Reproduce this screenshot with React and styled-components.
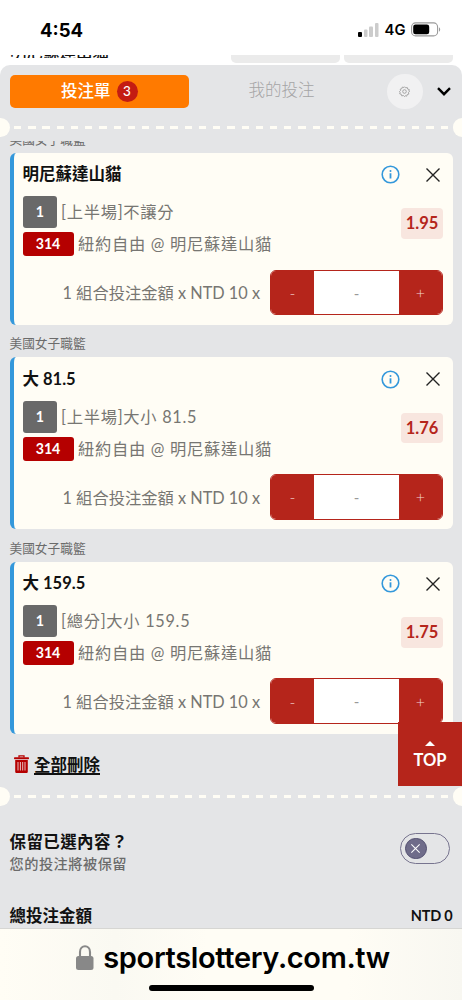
import React from 'react'
import styled, { createGlobalStyle } from 'styled-components'

const red = '#b5251b'
const cream = '#fffdf5'
const grey = '#e4e5e7'

const GlobalStyle = createGlobalStyle`
  * {
    box-sizing: border-box;
  }
  body {
    margin: 0;
    font-family: Lato, 'Noto Sans CJK TC', sans-serif;
    background: #fff;
    color: #111;
  }
  button {
    border: 0;
    padding: 0;
    font: inherit;
    background: none;
  }
`

const Screen = styled.div`
  width: 462px;
  height: 1000px;
  display: flex;
  flex-direction: column;
  overflow: hidden;
  background: #fff;
`

/* status bar */
const StatusBar = styled.header`
  height: 55px;
  flex: none;
  display: flex;
  align-items: center;
  justify-content: space-between;
  padding: 4px 21px 0 40px;
  font-family: Inter, sans-serif;
`

const Clock = styled.span`
  font-size: 18.5px;
  font-weight: 700;
  letter-spacing: 0;
  color: #000;
`

const StatusIcons = styled.div`
  display: flex;
  align-items: center;
  gap: 5.5px;
  font-size: 14.8px;
  font-weight: 600;
  color: #000;
`

/* bottom edge of the page behind the bet slip */
const PageBehind = styled.div`
  height: 10px;
  flex: none;
  display: flex;
  gap: 4.5px;
  padding: 0 9px 0 10px;
  overflow: hidden;
`

const BehindTitle = styled.div`
  width: 216.5px;
  height: 3px;
  flex: none;
  display: flex;
  align-items: flex-end;
  overflow: hidden;
  font-size: 16.5px;
  font-weight: 500;
  line-height: 11px;
`

const BehindButton = styled.div`
  width: 108.5px;
  height: 7.5px;
  flex: none;
  border-radius: 0 0 5px 5px;
  background: #ebebeb;
`

const Slip = styled.main`
  height: 863px;
  flex: none;
  display: flex;
  flex-direction: column;
  overflow: hidden;
  border-radius: 10px 10px 0 0;
  background: ${grey};
`

const Tabs = styled.nav`
  height: 52.5px;
  flex: none;
  display: flex;
  align-items: center;
  padding: 0 11px 0 9.5px;
`

const Tab = styled.button`
  width: ${({ $active }) => ($active ? '179.5px' : '185px')};
  height: 33.5px;
  display: flex;
  align-items: center;
  justify-content: center;
  gap: 6px;
  border-radius: 5px;
  padding-bottom: ${({ $active }) => ($active ? 0 : '1px')};
  font-size: 16.5px;
  line-height: 21px;
  font-weight: ${({ $active }) => ($active ? 500 : 300)};
  color: ${({ $active }) => ($active ? '#fff' : '#a4a4a5')};
  background: ${({ $active }) => ($active ? '#ff7a00' : 'transparent')};
`

const Count = styled.span`
  width: 21px;
  height: 21px;
  border-radius: 50%;
  background: #c41c12;
  font-size: 13.5px;
  font-weight: 500;
  line-height: 21px;
  text-align: center;
`

const GearButton = styled.button`
  width: 35.5px;
  height: 35.5px;
  margin: 0 14px 0 13px;
  display: flex;
  align-items: center;
  justify-content: center;
  border-radius: 50%;
  background: #f1f1f2;
`

/* ticket perforation with a notch on each side */
const Perforation = styled.div`
  height: 19px;
  flex: none;
  display: flex;
  align-items: center;
  justify-content: space-between;
  &::before,
  &::after {
    content: '';
    width: 9.5px;
    height: 19px;
    background: ${cream};
    border-radius: 0 9.5px 9.5px 0;
  }
  &::after {
    border-radius: 9.5px 0 0 9.5px;
  }
`

const Dashes = styled.div`
  width: 434px;
  height: 3px;
  background: repeating-linear-gradient(90deg, ${cream} 0 7.3px, transparent 7.3px 14.22px);
`

/* scrolled list, the first league name is half hidden */
const BetList = styled.section`
  height: 593px;
  margin-top: 4px;
  flex: none;
  display: flex;
  flex-direction: column;
  justify-content: flex-end;
  overflow: hidden;
  padding: 0 9.5px;
`

const League = styled.h3`
  height: 32.6px;
  flex: none;
  margin: 0;
  padding-top: 5.4px;
  font-size: 12.7px;
  font-weight: 400;
  line-height: 27px;
  color: #6b6b6b;
`

const Card = styled.article`
  height: 171.8px;
  flex: none;
  display: flex;
  flex-direction: column;
  padding: 8.4px 9.5px 0 9px;
  border-left: 4px solid #3498db;
  border-radius: 6px;
  background: ${cream};
`

const CardHead = styled.div`
  height: 27px;
  display: flex;
  align-items: center;
  justify-content: space-between;
`

const Pick = styled.h2`
  margin: 0;
  font-size: 16.5px;
  font-weight: 700;
  line-height: 27px;
  color: #111;
`

const CardActions = styled.div`
  display: flex;
  align-items: center;
  gap: 26.5px;
  padding-right: 3px;
`

const CardBody = styled.div`
  display: flex;
  align-items: center;
  justify-content: space-between;
  margin-top: 7.8px;
  height: 60px;
`

const Lines = styled.div`
  display: flex;
  flex-direction: column;
  gap: 4px;
`

const Line = styled.div`
  display: flex;
  align-items: center;
  gap: ${({ $gap }) => $gap}px;
  font-size: 16.3px;
  font-weight: 400;
  letter-spacing: 0.7px;
  line-height: 24px;
  white-space: nowrap;
  color: #777672;
`

const Tag = styled.span`
  width: ${({ $wide }) => ($wide ? 51 : 34.5)}px;
  height: ${({ $wide }) => ($wide ? 24 : 32)}px;
  display: flex;
  align-items: center;
  justify-content: center;
  border-radius: 3px;
  background: ${({ $wide }) => ($wide ? '#b50000' : '#696969')};
  color: #fff;
  font-size: 14.2px;
  font-weight: 700;
  letter-spacing: 0;
`

const Odds = styled.span`
  width: 42px;
  height: 30.5px;
  margin-top: -5px;
  border-radius: 4px;
  background: #f8e6df;
  color: ${red};
  font-size: 16.5px;
  font-weight: 700;
  line-height: 31px;
  text-align: center;
`

const Stake = styled.div`
  display: flex;
  align-items: center;
  justify-content: flex-end;
  gap: 10px;
  margin-top: 13.5px;
  font-size: 16.3px;
  font-weight: 400;
  color: #777672;
  white-space: nowrap;
`

const Stepper = styled.div`
  width: 173px;
  height: 45.5px;
  display: flex;
  overflow: hidden;
  border: 1px solid ${red};
  border-radius: 6px;
  background: #fff;
`

const StepButton = styled.button`
  width: 43px;
  background: ${red};
  color: #f3d5d0;
  font-size: 16px;
  font-weight: 300;
`

const StepValue = styled.span`
  flex: 1;
  line-height: 44px;
  text-align: center;
  font-size: 15px;
  color: #999;
`

const Actions = styled.div`
  height: 53px;
  flex: none;
  display: flex;
  align-items: flex-start;
  justify-content: space-between;
  padding-left: 14px;
`

const ClearAll = styled.button`
  display: flex;
  align-items: center;
  gap: 5px;
  height: 61px;
  font-size: 16.5px;
  font-weight: 700;
  color: #111;
  text-decoration: underline;
  text-decoration-thickness: 1.5px;
  text-underline-offset: 2px;
`

const TopButton = styled.button`
  position: relative;
  width: 64px;
  height: 64px;
  margin-top: -11.5px;
  flex: none;
  display: flex;
  flex-direction: column;
  align-items: center;
  padding-top: 19px;
  background: ${red};
  color: #fff;
  font-size: 16.5px;
  font-weight: 700;
  line-height: 20px;
`

const TopArrow = styled.span`
  margin-bottom: 4px;
  border: 5px solid transparent;
  border-top: 0;
  border-bottom: 5px solid #fff;
`

const Keep = styled.section`
  height: 86px;
  flex: none;
  display: flex;
  align-items: center;
  justify-content: space-between;
  padding: 0 12px 0 9.5px;
`

const KeepText = styled.div`
  padding-top: 7px;
`

const KeepTitle = styled.h4`
  margin: 0;
  font-size: 16.5px;
  font-weight: 700;
  line-height: 22px;
  letter-spacing: 0.4px;
`

const KeepHint = styled.p`
  margin: 0;
  font-size: 14.2px;
  font-weight: 500;
  line-height: 21px;
  letter-spacing: 0.5px;
  color: #6b6b6b;
`

const Switch = styled.button`
  width: 50px;
  height: 31px;
  display: flex;
  align-items: center;
  padding-left: 4px;
  border: 1px solid #77748f;
  border-radius: 16px;
`

const Knob = styled.span`
  width: 21.5px;
  height: 21.5px;
  display: flex;
  align-items: center;
  justify-content: center;
  border: 1px solid #504d6e;
  border-radius: 50%;
  background: #6f6c8a;
`

const Total = styled.div`
  display: flex;
  align-items: center;
  justify-content: space-between;
  height: 47px;
  flex: none;
  padding: 0 9.5px;
  font-size: 16.5px;
  font-weight: 700;
`

const TotalValue = styled.span`
  font-size: 14.5px;
  letter-spacing: -0.2px;
`

/* browser address bar */
const AddressBar = styled.footer`
  height: 72px;
  flex: none;
  display: flex;
  flex-direction: column;
  align-items: center;
  border-top: 1px solid #d6d6d3;
  background: linear-gradient(90deg, ${cream}, #faf9f2 25%, ${cream} 45%, ${cream} 75%, #f8f7f1);
  font-family: Inter, sans-serif;
`

const Address = styled.div`
  height: 56px;
  display: flex;
  align-items: center;
  gap: 9px;
  padding-left: 4px;
  font-size: 29px;
  font-weight: 600;
  letter-spacing: -0.35px;
  color: #000;
`

const HomeBar = styled.div`
  width: 165px;
  height: 6px;
  border-radius: 3px;
  background: #000;
`

const bets = [
  { pick: '明尼蘇達山貓', market: '[上半場]不讓分', odds: '1.95' },
  { pick: '大 81.5', market: '[上半場]大小 81.5', odds: '1.76' },
  { pick: '大 159.5', market: '[總分]大小 159.5', odds: '1.75' },
]

function SignalIcon() {
  return (
    <svg width="21" height="14" viewBox="0 0 21 14">
      <rect x="0" y="9" width="4" height="5" rx="1" fill="#000" />
      <rect x="6" y="6.5" width="3.5" height="7.5" rx="1" fill="#ccc" />
      <rect x="11" y="3.5" width="4" height="10.5" rx="1" fill="#ccc" />
      <rect x="17" y="0" width="3.5" height="14" rx="1" fill="#ccc" />
    </svg>
  )
}

function BatteryIcon() {
  return (
    <svg width="30" height="15" viewBox="0 0 30 15">
      <rect x=".6" y=".9" width="26" height="13" rx="4" fill="#fff" stroke="#999" strokeWidth="1.1" />
      <rect x="2.2" y="2.5" width="16" height="9.8" rx="2.3" fill="#000" />
      <path d="M28 5.2c1.6.7 1.6 3.8 0 4.5z" fill="#999" />
    </svg>
  )
}

function GearIcon() {
  return (
    <svg width="11" height="11" viewBox="0 0 22 22" fill="none" stroke="#999" strokeWidth="1.7">
      <path d="M11 1.5l2.3 2.3 3.2-.8.9 3.2 3.2.9-.8 3.2L21 11l-2.2 2 .8 3.2-3.2.9-.9 3.2-3.2-.8L11 21l-2.3-2-3.2.8-.9-3.2-3.2-.9.8-3.2L1 11l2.2-2-.8-2.7 3.2-.9.9-3.2 3.2.8z" />
      <circle cx="11" cy="11" r="3.6" />
    </svg>
  )
}

function InfoIcon() {
  return (
    <svg width="19" height="19" viewBox="0 0 19 19">
      <circle cx="9.5" cy="9.5" r="8.3" fill="none" stroke="#3498db" strokeWidth="1.6" />
      <circle cx="9.5" cy="5.9" r="1" fill="#3498db" />
      <path d="M9.5 8.3v5.2" stroke="#3498db" strokeWidth="1.8" />
    </svg>
  )
}

function CloseIcon({ size = 14, color = '#222', width = 1.4 }) {
  return (
    <svg width={size} height={size} viewBox="0 0 14 14" stroke={color} strokeWidth={width}>
      <path d="M.5.5l13 13M13.5.5l-13 13" />
    </svg>
  )
}

function TrashIcon() {
  return (
    <svg width="15" height="18" viewBox="0 0 15 18">
      <path d="M5 2.5V.8h5v1.7" fill="none" stroke="#b50000" strokeWidth="1.3" />
      <rect x="0" y="2.3" width="15" height="2" rx=".7" fill="#b50000" />
      <path d="M1.2 5h12.6v11.4c0 .9-.6 1.6-1.5 1.6H2.7c-.9 0-1.5-.7-1.5-1.6z" fill="#b50000" />
      <path d="M4 7v8.5M6.4 7v8.5M8.7 7v8.5M11 7v8.5" stroke="#ecd6d6" strokeWidth=".9" />
    </svg>
  )
}

function LockIcon() {
  return (
    <svg width="18" height="25" viewBox="0 0 18 25">
      <path d="M4 12V7c0-7.6 10-7.6 10 0v5" fill="none" stroke="#888" strokeWidth="2.1" />
      <rect x="0" y="11" width="17.5" height="14" rx="2.5" fill="#888" />
    </svg>
  )
}

function BetCard({ pick, market, odds }) {
  return (
    <>
      <League>美國女子職籃</League>
      <Card>
        <CardHead>
          <Pick>{pick}</Pick>
          <CardActions>
            <InfoIcon />
            <CloseIcon />
          </CardActions>
        </CardHead>
        <CardBody>
          <Lines>
            <Line $gap={4}>
              <Tag>1</Tag>
              {market}
            </Line>
            <Line $gap={4.5}>
              <Tag $wide>314</Tag>
              紐約自由 @ 明尼蘇達山貓
            </Line>
          </Lines>
          <Odds>{odds}</Odds>
        </CardBody>
        <Stake>
          <span>1 組合投注金額 x NTD 10 x</span>
          <Stepper>
            <StepButton>-</StepButton>
            <StepValue>-</StepValue>
            <StepButton>+</StepButton>
          </Stepper>
        </Stake>
      </Card>
    </>
  )
}

function App() {
  return (
    <Screen>
      <GlobalStyle />
      <StatusBar>
        <Clock>4:54</Clock>
        <StatusIcons>
          <SignalIcon />
          4G
          <BatteryIcon />
        </StatusIcons>
      </StatusBar>
      <PageBehind>
        <BehindTitle>明尼蘇達山貓</BehindTitle>
        <BehindButton />
        <BehindButton />
      </PageBehind>
      <Slip>
        <Tabs>
          <Tab $active>
            投注單<Count>3</Count>
          </Tab>
          <Tab>我的投注</Tab>
          <GearButton>
            <GearIcon />
          </GearButton>
          <svg width="14" height="9" viewBox="0 0 14 9" fill="none" stroke="#000" strokeWidth="2.4">
            <path d="M1 1.2l6 6 6-6" />
          </svg>
        </Tabs>
        <Perforation>
          <Dashes />
        </Perforation>
        <BetList>
          {bets.map((bet) => (
            <BetCard key={bet.pick} {...bet} />
          ))}
        </BetList>
        <Actions>
          <ClearAll>
            <TrashIcon />
            全部刪除
          </ClearAll>
          <TopButton>
            <TopArrow />
            TOP
          </TopButton>
        </Actions>
        <Perforation>
          <Dashes />
        </Perforation>
        <Keep>
          <KeepText>
            <KeepTitle>保留已選內容？</KeepTitle>
            <KeepHint>您的投注將被保留</KeepHint>
          </KeepText>
          <Switch>
            <Knob>
              <CloseIcon size={9} color="#fff" width={1.6} />
            </Knob>
          </Switch>
        </Keep>
        <Total>
          總投注金額
          <TotalValue>NTD 0</TotalValue>
        </Total>
      </Slip>
      <AddressBar>
        <Address>
          <LockIcon />
          sportslottery.com.tw
        </Address>
        <HomeBar />
      </AddressBar>
    </Screen>
  )
}

export default App
